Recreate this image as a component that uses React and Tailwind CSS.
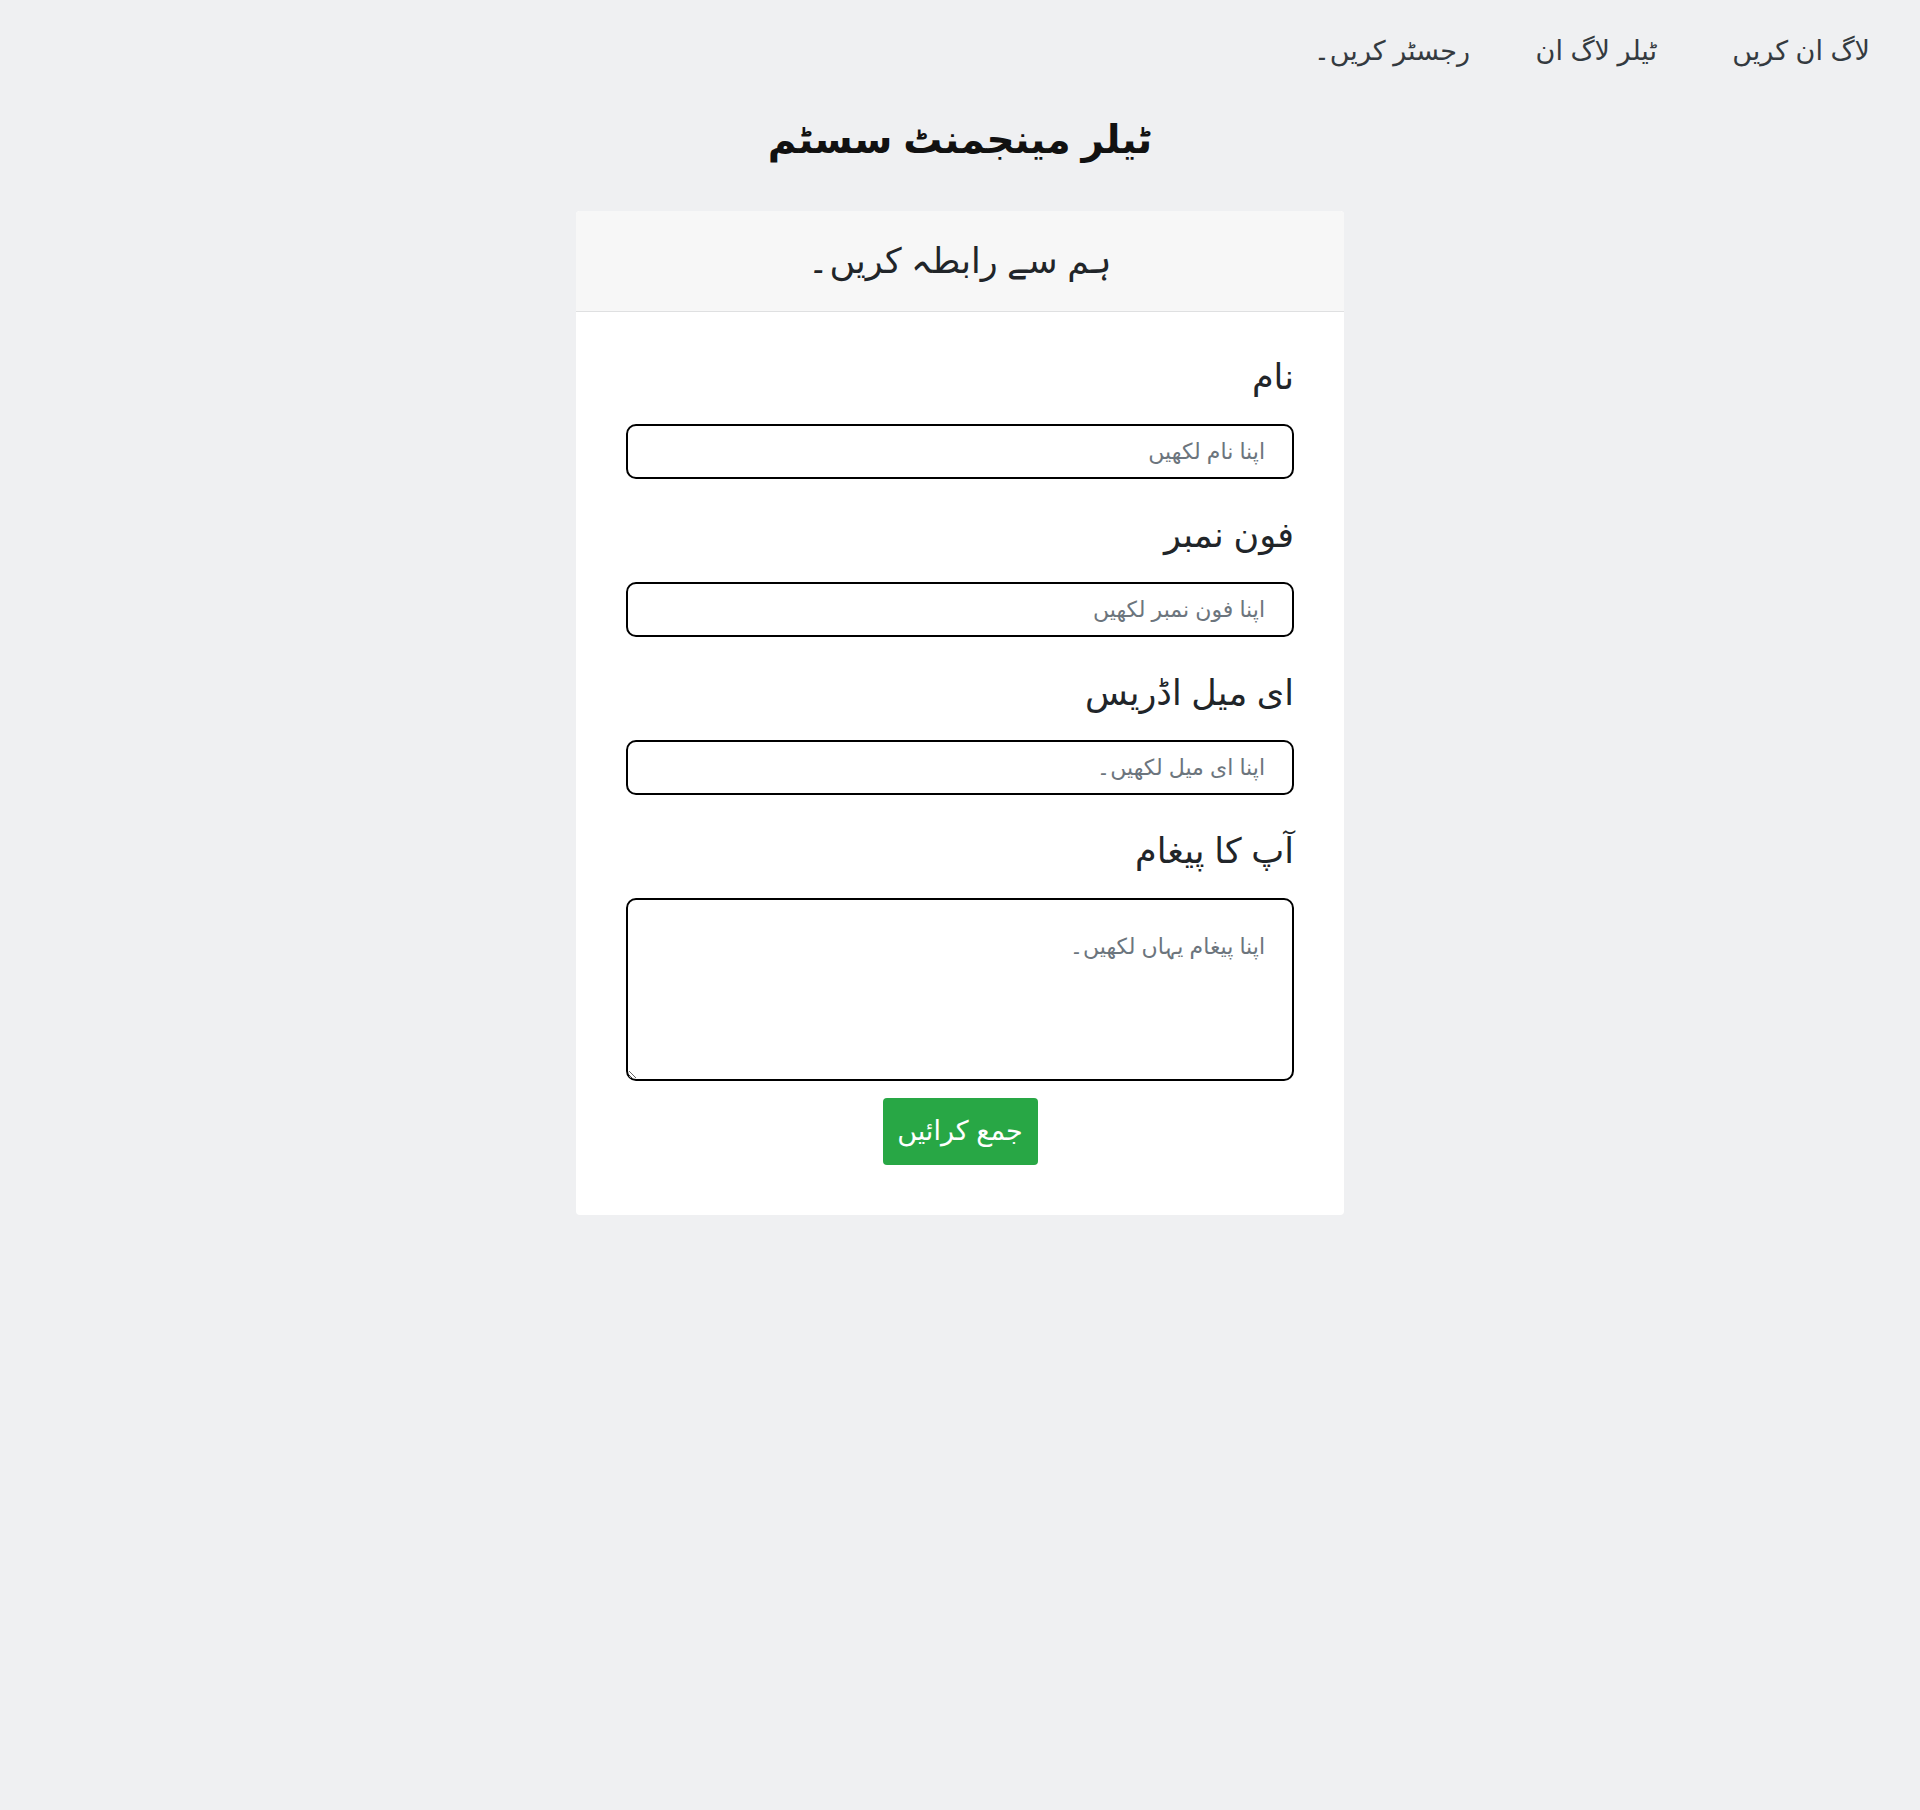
import React, { useState } from 'react';

const navLinks = [
  { label: 'لاگ ان کریں', width: 'w-[213px]' },
  { label: 'ٹیلر لاگ ان', width: 'w-[187px]' },
  { label: 'رجسٹر کریں۔', width: 'w-auto' },
];

function Field({ label, placeholder, type = 'text', multiline = false, value, onChange }) {
  return (
    <div className="flex flex-col">
      <label className="block text-right text-[35px] leading-[32px] text-[#212529] mb-[31px]">{label}</label>
      {multiline ? (
        <textarea
          placeholder={placeholder}
          value={value}
          onChange={onChange}
          className="w-full h-[183px] border-2 border-black rounded-[10px] bg-white px-[27px] pt-[30px] text-[22px] text-[#212529] placeholder:text-[#6c757d] outline-none"
        />
      ) : (
        <input
          type={type}
          placeholder={placeholder}
          value={value}
          onChange={onChange}
          className="w-full h-[55px] border-2 border-black rounded-[10px] bg-white px-[27px] text-[22px] text-[#212529] placeholder:text-[#6c757d] outline-none"
        />
      )}
    </div>
  );
}

export default function App() {
  const [form, setForm] = useState({ name: '', phone: '', email: '', message: '' });

  const update = (key) => (e) => setForm({ ...form, [key]: e.target.value });

  const handleSubmit = (e) => {
    e.preventDefault();
  };

  return (
    <div dir="rtl" className="min-h-screen w-full bg-[#eff0f2] font-['Liberation_Sans','DejaVu_Sans',sans-serif]">
      {/* Nav */}
      <nav className="flex pr-[50px] pt-[32px]">
        {navLinks.map((link) => (
          <a key={link.label} href="#" className={`${link.width} text-[27px] leading-[38px] text-[#343a40]`}>
            {link.label}
          </a>
        ))}
      </nav>

      <h1 className="mt-[38px] text-center text-[39px] leading-[64px] font-bold text-[#111]">ٹیلر مینجمنٹ سسٹم</h1>

      <div className="mx-auto mt-[39px] w-[768px] rounded-[4px] bg-white overflow-hidden">
        <div className="h-[101px] flex items-center justify-center bg-[#f7f7f7] border-b border-[#dfe0e1]">
          <h2 className="text-[35px] text-[#212529]">ہم سے رابطہ کریں۔</h2>
        </div>

        <form onSubmit={handleSubmit} className="px-[50px] pt-[49px] pb-[50px] flex flex-col">
          <div className="flex flex-col gap-[40px]">
            <Field label="نام" placeholder="اپنا نام لکھیں" value={form.name} onChange={update('name')} />
            <Field label="فون نمبر" placeholder="اپنا فون نمبر لکھیں" value={form.phone} onChange={update('phone')} />
            <Field label="ای میل اڈریس" type="email" placeholder="اپنا ای میل لکھیں۔" value={form.email} onChange={update('email')} />
            <Field label="آپ کا پیغام" multiline placeholder="اپنا پیغام یہاں لکھیں۔" value={form.message} onChange={update('message')} />
          </div>
          <div className="flex justify-center mt-[17px]">
            <button type="submit" className="w-[155px] h-[67px] rounded-[4px] bg-[#28a745] text-white text-[27px]">
              جمع کرائیں
            </button>
          </div>
        </form>
      </div>
    </div>
  );
}
